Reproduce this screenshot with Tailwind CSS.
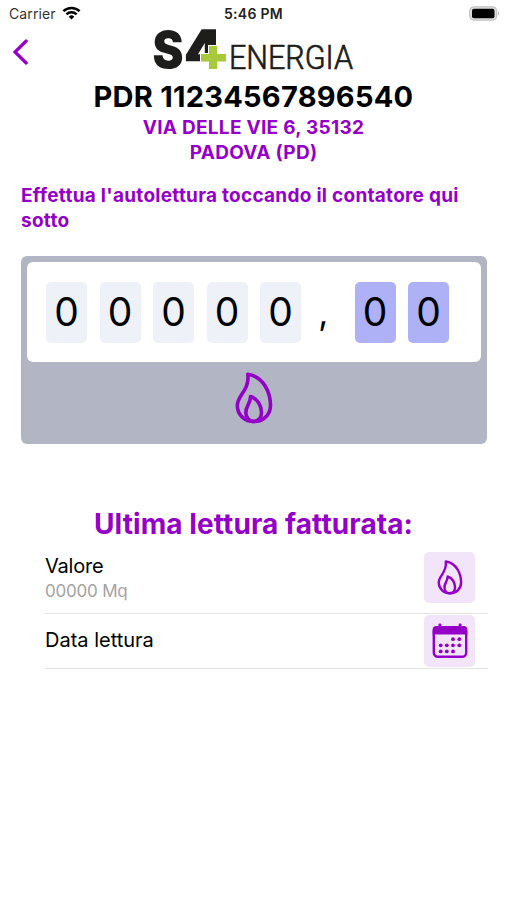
<!DOCTYPE html>
<html lang="it">
<head>
<meta charset="utf-8">
<title>S4 Energia</title>
<script src="https://cdn.jsdelivr.net/npm/@tailwindcss/browser@4"></script>
</head>
<body class="bg-white font-['Inter','Liberation_Sans',sans-serif] text-black">
<svg class="hidden">
  <symbol id="flame" viewBox="0 0 38 52">
    <path d="M12.800 2.200C22 3.500 27 8.500 30.500 14.500c3.200 5.500 5 12.500 5 19C35.500 43 28 49.500 19 49.500S2.300 43 2.300 33.500C2.300 23 14.800 18.500 12.800 2.200Z" fill="none" stroke="currentColor" stroke-width="3.600" stroke-linejoin="round"/>
    <path d="M15.500 24.500C22.500 26.500 26.500 34 26.500 40.500c0 5.500-3.500 9-7.800 9s-7.900-3.500-7.900-9c0-6.500 4.900-9 4.700-16Z" fill="none" stroke="currentColor" stroke-width="3.600" stroke-linejoin="round"/>
  </symbol>
</svg>
<main class="flex h-[900px] w-[507px] flex-col overflow-hidden">
  <header class="grid h-[27px] grid-cols-3 items-center pl-[9px] pr-[7px] text-[14px] leading-none">
    <div class="flex items-center gap-[6px]"><span class="tracking-[0.1px] text-[#333]">Carrier</span>
      <svg class="mt-[-2px] h-[14px] w-[19px]" viewBox="0 0 19 14" fill="none" stroke="#000" stroke-width="2.5"><path d="M1.4 5.200a11.600 11.600 0 0 1 16.200 0M4.400 8.300a7.300 7.300 0 0 1 10.200 0"/><path d="M9.500 13.500 6.700 10.700a4 4 0 0 1 5.600 0Z" fill="#000" stroke="none"/></svg>
    </div>
    <div class="mr-[2px] mt-[1px] whitespace-nowrap text-center text-[14px] font-semibold tracking-[0.3px] text-[#222]">5:46 PM</div>
    <svg class="h-[15px] w-[31px] justify-self-end" viewBox="0 0 31 15"><rect x=".7" y=".8" width="27" height="13.400" rx="4" fill="#ddd" stroke="#bbb"/><rect x="3" y="2.800" width="22.500" height="9.400" rx="2" fill="#000"/><path d="M29 5q2.500 2.500 0 5Z" fill="#bbb"/></svg>
  </header>
  <div class="flex h-[53px] items-start">
    <svg class="ml-3 mt-[12px] h-[26px] w-[17px]" viewBox="0 0 17 26"><path d="M14.200 2 3 13l11.200 11" fill="none" stroke="#9400c8" stroke-width="3.200" stroke-linecap="round"/></svg>
    <svg class="ml-[121px] h-[46px] w-[206px] overflow-visible" viewBox="150 27 206 46" font-family="Inter, sans-serif" fill="#1d1d1b">
      <text x="152.500" y="68" font-size="51.500" font-weight="900" textLength="31" lengthAdjust="spacingAndGlyphs">S</text>
      <text x="184.500" y="69" font-size="53" font-weight="900" textLength="37" lengthAdjust="spacingAndGlyphs" stroke="#1d1d1b" stroke-width="1.500">4</text>
      <path d="M184 61.300h17V71h-17ZM208 45h10v8h9v18h-27v-18h8Z" fill="#fff"/>
      <path d="M209 46h8v8h9v7.500h-9V69h-8v-7.500h-8V54h8Z" fill="#a8c93c"/>
      <text x="229" y="69" font-family="Roboto, sans-serif" font-size="33" font-weight="300" stroke="#1d1d1b" stroke-width=".7" textLength="124" lengthAdjust="spacingAndGlyphs">ENERGIA</text>
    </svg>
  </div>
  <h1 class="h-[35px] whitespace-nowrap text-center text-[29px] font-bold leading-[34px] tracking-[0.250px]">PDR 11234567896540</h1>
  <p class="pt-[1px] text-center text-[19px] font-bold leading-[24.5px] tracking-[0.28px] text-[#9400c8]">VIA DELLE VIE 6, 35132<br>PADOVA (PD)</p>
  <p class="mt-[19px] whitespace-nowrap pl-[21px] text-[19px] font-bold leading-[24.5px] tracking-[0.27px] text-[#9400c8]">Effettua l'autolettura toccando il contatore qui<br>sotto</p>
  <section class="ml-[21px] mt-[23px] flex h-[188px] w-[466px] shrink-0 flex-col rounded-[6px] bg-[#b2b5c4] p-[6px]">
    <div class="flex h-[100px] items-center gap-[12.5px] rounded-[6px] bg-white pl-[19px] text-[39px] leading-[60px]">
      <span class="h-[61px] w-[41px] rounded-[5px] bg-[#eef1f7] text-center">0</span>
      <span class="h-[61px] w-[41px] rounded-[5px] bg-[#eef1f7] text-center">0</span>
      <span class="h-[61px] w-[41px] rounded-[5px] bg-[#eef1f7] text-center">0</span>
      <span class="h-[61px] w-[41px] rounded-[5px] bg-[#eef1f7] text-center">0</span>
      <span class="h-[61px] w-[41px] rounded-[5px] bg-[#eef1f7] text-center">0</span>
      <span class="h-[61px] w-[28.5px] pr-[9px] text-center text-[35px]">,</span>
      <span class="h-[61px] w-[41px] rounded-[5px] bg-[#aeb1f5] text-center">0</span>
      <span class="h-[61px] w-[41px] rounded-[5px] bg-[#aeb1f5] text-center">0</span>
    </div>
    <svg class="mt-[10px] h-[52px] w-[38px] self-center text-[#9400c8]"><use href="#flame"/></svg>
  </section>
  <h2 class="mt-[63px] whitespace-nowrap text-center text-[28px] font-bold leading-[34px] tracking-[0.08px] text-[#9400c8]">Ultima lettura fatturata:</h2>
  <div class="ml-[45px] flex h-[73px] w-[443px] items-center justify-between border-b border-[#e4e4e4] pr-[13px]">
    <div class="pt-[3px]"><div class="text-[20px] leading-[26px] tracking-[-0.2px]">Valore</div><div class="text-[17px] leading-[25px] tracking-[-0.2px] text-[#a3a3a3]">00000 Mq</div></div>
    <div class="flex h-[51px] w-[51px] items-center justify-center rounded-[5px] bg-[#f3e5f9]"><svg class="h-[35px] w-[26px] text-[#9400c8]"><use href="#flame"/></svg></div>
  </div>
  <div class="ml-[45px] flex h-[55px] w-[443px] items-center justify-between border-b border-[#e4e4e4] pr-[13px]">
    <div class="pb-[2px] text-[20px] leading-[26px]">Data lettura</div>
    <div class="flex h-[52px] w-[51px] items-center justify-center rounded-[5px] bg-[#f3e5f9]">
      <svg class="h-[36px] w-[36px]" viewBox="0 0 36 36" fill="#9400c8"><rect x="1.800" y="4.200" width="32.400" height="29.500" rx="4" fill="none" stroke="#9400c8" stroke-width="2.400"/><path d="M.6 11.500V7a4 4 0 0 1 4-4h26.800a4 4 0 0 1 4 4v4.500Z"/><rect x="6.500" y=".5" width="2.800" height="5" rx="1"/><rect x="26.700" y=".5" width="2.800" height="5" rx="1"/>
      <g><circle cx="21" cy="16.200" r="1.900"/><circle cx="27.300" cy="16.200" r="1.900"/><circle cx="8.700" cy="22.300" r="1.900"/><circle cx="14.800" cy="22.300" r="1.900"/><circle cx="21" cy="22.300" r="1.900"/><circle cx="27.300" cy="22.300" r="1.900"/><circle cx="8.700" cy="28.400" r="1.900"/><circle cx="14.800" cy="28.400" r="1.900"/><circle cx="21" cy="28.400" r="1.900"/></g></svg>
    </div>
  </div>
</main>
</body>
</html>
